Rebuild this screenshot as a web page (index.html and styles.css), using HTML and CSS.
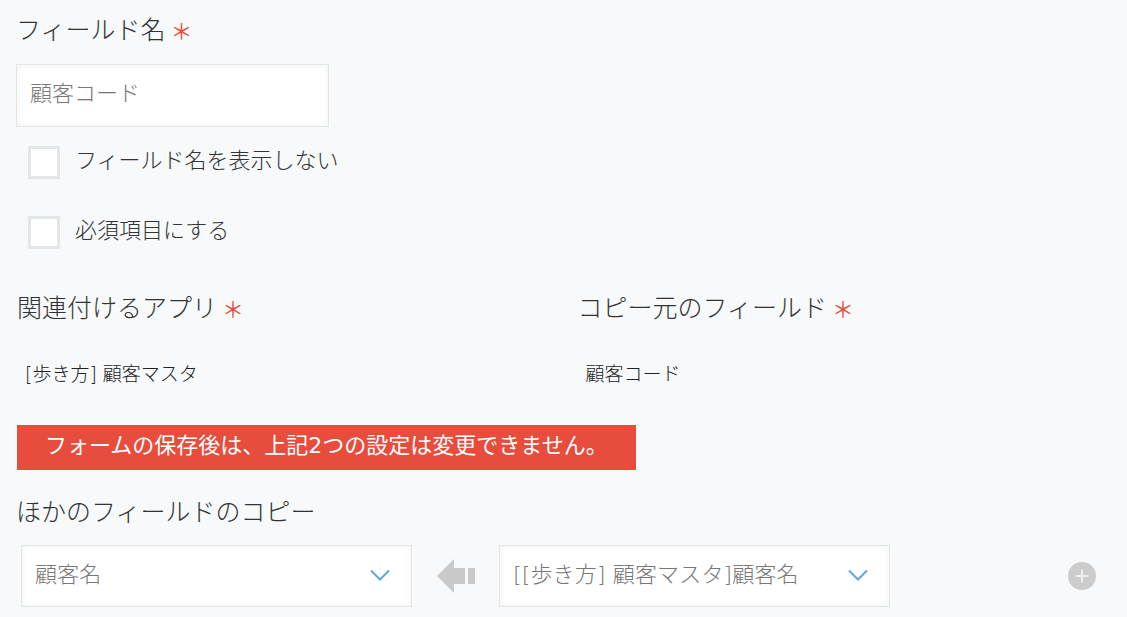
FILE: index.html
```html
<!DOCTYPE html>
<html lang="ja">
<head>
  <meta charset="UTF-8" />
  <title>フィールドの設定</title>
  <link rel="stylesheet" href="styles.css">
</head>
<body>
  <main class="form">
    <div class="label label-first">フィールド名<span class="required">＊</span></div>
    <div class="input">顧客コード</div>

    <div class="check-row check-first"><span class="checkbox"></span><span class="check-text">フィールド名を表示しない</span></div>
    <div class="check-row check-second"><span class="checkbox"></span><span class="check-text">必須項目にする</span></div>

    <div class="lookup">
      <div class="lookup-col">
        <div class="label">関連付けるアプリ<span class="required">＊</span></div>
        <div class="value">[歩き方] 顧客マスタ</div>
      </div>
      <div class="lookup-col">
        <div class="label">コピー元のフィールド<span class="required">＊</span></div>
        <div class="value value-second">顧客コード</div>
      </div>
    </div>

    <div class="alert">フォームの保存後は、上記2つの設定は変更できません。</div>

    <div class="label label-copy">ほかのフィールドのコピー</div>
    <div class="mapping">
      <div class="select">
        <span class="select-text">顧客名</span>
        <svg class="chevron" width="20" height="12" viewBox="0 0 20 12"><path d="M1 1.5 10 10.5 19 1.5" fill="none" stroke="#5aa9e6" stroke-width="2"/></svg>
      </div>
      <svg class="arrow" width="38" height="34" viewBox="0 0 38 34"><path d="M0 17 17 0V9H28V25H17V34Z" fill="#c9c9c9"/><rect x="31" y="9" width="7" height="16" fill="#c9c9c9"/></svg>
      <div class="select">
        <span class="select-text">[[歩き方] 顧客マスタ]顧客名</span>
        <svg class="chevron" width="20" height="12" viewBox="0 0 20 12"><path d="M1 1.5 10 10.5 19 1.5" fill="none" stroke="#5aa9e6" stroke-width="2"/></svg>
      </div>
      <svg class="add" width="28" height="28" viewBox="0 0 28 28"><circle cx="14" cy="14" r="14" fill="#cccccc"/><path d="M14 7.5V20.5M7.5 14H20.5" stroke="#eeeeee" stroke-width="2"/></svg>
    </div>
  </main>
</body>
</html>
```

FILE: styles.css
```css
body {
  margin: 0;
  background-color: #f7f9fa;
  color: #333333;
  font-family: "DejaVu Sans", "Noto Sans CJK JP", sans-serif;
  overflow: hidden;
}
.form {
  height: 617px;
  padding-left: 17px;
  box-sizing: border-box;
}
.label {
  font-size: 25px;
  line-height: 36px;
  font-weight: 300;
}
.label-first {
  padding-top: 13px;
  margin-left: -1px;
}
.required {
  margin-left: 5px;
  font-size: 22px;
  line-height: 1;
  font-weight: 400;
  color: #e74c3c;
}
.input {
  box-sizing: border-box;
  width: 313px;
  height: 63px;
  margin: 15px 0 0 -1px;
  padding-left: 13px;
  line-height: 58px;
  font-size: 22px;
  font-weight: 300;
  color: #777777;
  background-color: #ffffff;
  border: 1px solid #e3e7e8;
  box-shadow: inset 0 0 6px #f0f0f0;
}
.check-row {
  display: flex;
  align-items: center;
  gap: 15px;
  height: 33px;
  padding-left: 11px;
  font-size: 22px;
  font-weight: 300;
}
.check-first {
  margin-top: 19px;
}
.check-second {
  margin-top: 37px;
}
.check-text {
  margin-bottom: 10px;
}
.checkbox {
  box-sizing: border-box;
  width: 32px;
  height: 33px;
  background-color: #ffffff;
  border: 3px solid #e3e7e8;
}
.lookup {
  display: flex;
  margin-top: 42px;
}
.lookup-col {
  width: 563px;
}
.lookup-col + .lookup-col {
  padding-left: 11px;
}
.value {
  margin-top: 33px;
  padding-left: 8px;
  font-size: 19px;
  line-height: 28px;
  font-weight: 300;
  color: #222222;
}
.alert {
  box-sizing: border-box;
  width: 619px;
  height: 45px;
  margin-top: 37px;
  padding-left: 28px;
  line-height: 41px;
  font-size: 22px;
  color: #ffffff;
  background-color: #e74c3c;
}
.label-copy {
  margin-top: 25px;
  margin-left: -1px;
}
.mapping {
  display: flex;
  align-items: center;
  margin: 14px 0 0 4px;
}
.select {
  box-sizing: border-box;
  display: flex;
  align-items: center;
  justify-content: space-between;
  width: 391px;
  height: 62px;
  padding: 0 21px 0 13px;
  font-size: 22px;
  font-weight: 300;
  color: #777777;
  background-color: #ffffff;
  border: 1px solid #e3e7e8;
  box-shadow: inset 0 0 6px #f0f0f0;
}
.select-text {
  margin-bottom: 8px;
  letter-spacing: 0.15px;
}
.chevron {
  flex: none;
  margin-bottom: 3px;
}
.arrow {
  flex: none;
  margin: 0 24px 0 25px;
}
.add {
  flex: none;
  margin-left: 178px;
}
```
